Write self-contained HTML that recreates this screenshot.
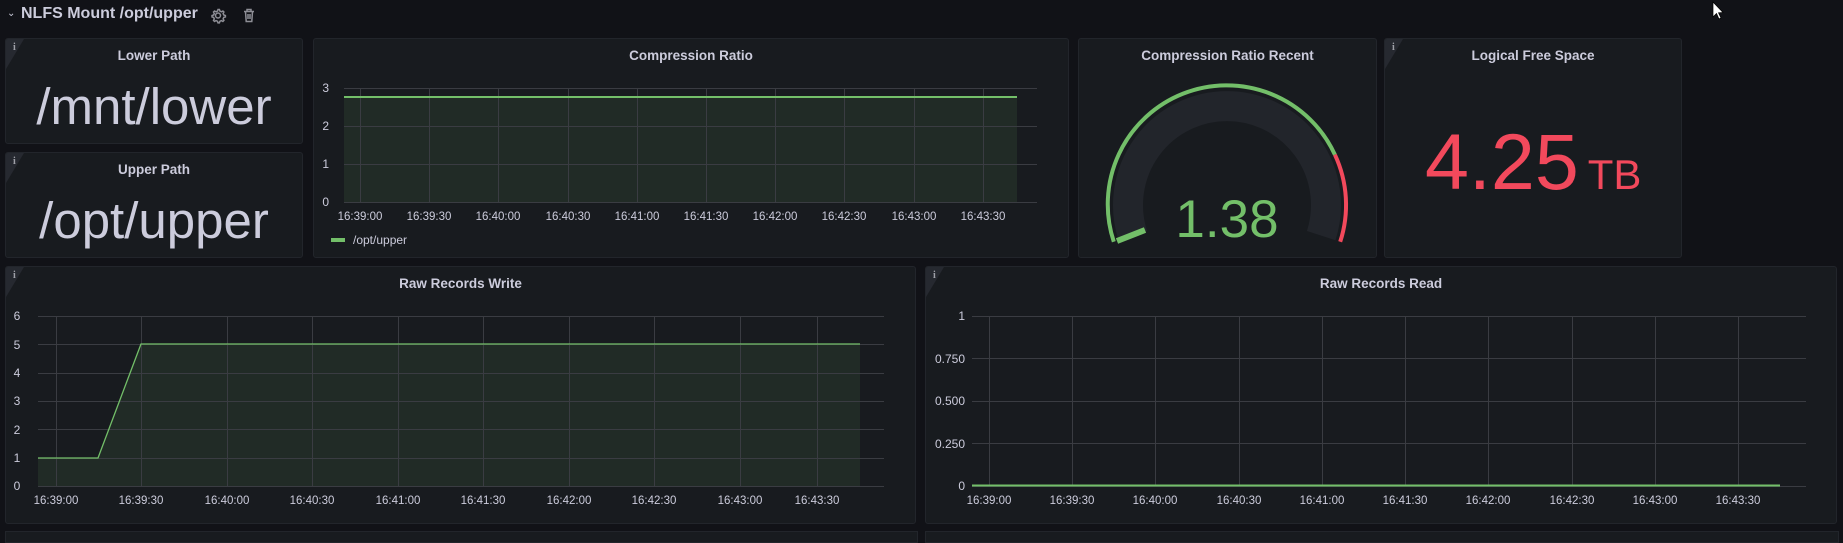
<!DOCTYPE html>
<html><head><meta charset="utf-8">
<style>
html,body{margin:0;padding:0;width:1843px;height:534px;overflow:hidden;background:#111217;font-family:"Liberation Sans",sans-serif;color:#ccccdc}
.p{position:absolute;background:#181b1f;border:1px solid #22252b;border-radius:3px;box-sizing:border-box;overflow:hidden}
.t{position:absolute;left:0;right:0;top:9px;text-align:center;font-size:13.5px;font-weight:bold;color:#ccccdc}
.i{position:absolute;left:0;top:0;width:0;height:0;border-top:30px solid #262930;border-right:18px solid transparent}
.ii{position:absolute;left:7px;top:3px;font-size:10px;font-weight:bold;color:#9fa1a8;font-family:"Liberation Serif",serif}
.big{position:absolute;left:0;right:0;text-align:center;color:#ccccdc}
svg text{font-family:"Liberation Sans",sans-serif}
</style></head><body>
<div style="position:absolute;left:7px;top:8px;font-size:10px;color:#ccccdc">&#8964;</div>
<div style="position:absolute;left:21px;top:5px;font-size:16px;font-weight:bold;color:#ccccdc">NLFS Mount /opt/upper</div>
<svg style="position:absolute;left:0;top:0" width="1843" height="36">
<g fill="none" stroke="#8e8e96" stroke-width="1.5">
<circle cx="218" cy="15.5" r="2.5"/>
<path d="M218 9.5 l1.4 0 .5 1.6 1.5 .7 1.5-.8 1 1 -.8 1.5 .7 1.5 1.6 .5 0 1.4 -1.6 .5 -.7 1.5 .8 1.5 -1 1 -1.5-.8 -1.5 .7 -.5 1.6 -1.4 0 -.5-1.6 -1.5-.7 -1.5 .8 -1-1 .8-1.5 -.7-1.5 -1.6-.5 0-1.4 1.6-.5 .7-1.5 -.8-1.5 1-1 1.5 .8 1.5-.7z"/>
<path d="M244 11.5h10M247 11.5v-2h4v2M245.5 11.5l.7 10h5.6l.7-10M248 14v5M250 14v5"/>
</g>
<path d="M1713 2 L1713 17 L1716.5 13.5 L1719 19 L1721 18 L1718.5 12.8 L1723 12.5 Z" fill="#fff" stroke="#000" stroke-width="0.7"/>
</svg>

<div class="p" style="left:5px;top:38px;width:298px;height:106px"><div class="i"></div><div class="ii">i</div><div class="t">Lower Path</div><div class="big" style="top:38px;font-size:51px;line-height:60px">/mnt/lower</div></div>
<div class="p" style="left:5px;top:152px;width:298px;height:106px"><div class="i"></div><div class="ii">i</div><div class="t">Upper Path</div><div class="big" style="top:38px;font-size:51px;line-height:60px">/opt/upper</div></div>

<div class="p" style="left:313px;top:38px;width:756px;height:220px"><div class="t">Compression Ratio</div></div>
<div class="p" style="left:1078px;top:38px;width:299px;height:220px"><div class="t">Compression Ratio Recent</div></div>
<div class="p" style="left:1384px;top:38px;width:298px;height:220px"><div class="i"></div><div class="ii">i</div><div class="t">Logical Free Space</div>
<div style="position:absolute;left:40px;top:75px;font-size:79px;color:#f2495c;white-space:nowrap;line-height:96px">4.25<span style="font-size:42px;margin-left:9px">TB</span></div></div>

<div class="p" style="left:5px;top:266px;width:911px;height:258px"><div class="i"></div><div class="ii">i</div><div class="t">Raw Records Write</div></div>
<div class="p" style="left:925px;top:266px;width:912px;height:258px"><div class="i"></div><div class="ii">i</div><div class="t">Raw Records Read</div></div>
<div style="position:absolute;left:5px;top:531px;width:911px;height:10px;background:#181b1f;border:1px solid #22252b"></div>
<div style="position:absolute;left:925px;top:531px;width:912px;height:10px;background:#181b1f;border:1px solid #22252b"></div>

<svg style="position:absolute;left:0;top:0" width="1843" height="534">
<!-- Compression ratio -->
<rect x="344" y="97" width="673" height="105" fill="rgba(115,191,105,0.1)"/>
<g stroke="#3a3c42" stroke-width="1">
<path d="M344 88.5H1037M344 126.5H1037M344 164.5H1037M344 202.5H1037"/>
<path d="M360.5 88V202M429.5 88V202M498.5 88V202M568.5 88V202M637.5 88V202M706.5 88V202M775.5 88V202M844.5 88V202M914.5 88V202M983.5 88V202"/>
</g>
<path d="M344 97H1017" stroke="#73bf69" stroke-width="2"/>
<g font-size="12" fill="#ccccdc" text-anchor="end"><text x="329" y="92">3</text><text x="329" y="130">2</text><text x="329" y="168">1</text><text x="329" y="206">0</text></g>
<g font-size="11.5" fill="#ccccdc" text-anchor="middle">
<text x="360" y="220">16:39:00</text><text x="429" y="220">16:39:30</text><text x="498" y="220">16:40:00</text><text x="568" y="220">16:40:30</text><text x="637" y="220">16:41:00</text><text x="706" y="220">16:41:30</text><text x="775" y="220">16:42:00</text><text x="844" y="220">16:42:30</text><text x="914" y="220">16:43:00</text><text x="983" y="220">16:43:30</text></g>
<rect x="331" y="238" width="14" height="4" fill="#73bf69"/>
<text x="353" y="244" font-size="12" fill="#ccccdc">/opt/upper</text>

<!-- Gauge -->
<path d="M1132.8 235.6 A99 99 0 1 1 1321.2 235.6" fill="none" stroke="#22252b" stroke-width="30"/>
<path d="M1113.8 241.8 A119 119 0 0 1 1334.9 154.7" fill="none" stroke="#73bf69" stroke-width="4"/>
<path d="M1334.9 154.7 A119 119 0 0 1 1340.2 241.8" fill="none" stroke="#f2495c" stroke-width="4"/>
<path d="M1117 241 L1145 230" stroke="#73bf69" stroke-width="6"/>
<text x="1227" y="237" font-size="53" fill="#73bf69" text-anchor="middle">1.38</text>

<!-- Write -->
<path d="M38 486 V458 H98 L141 344 H860 V486 Z" fill="rgba(115,191,105,0.1)"/>
<g stroke="#3a3c42" stroke-width="1">
<path d="M38 316.5H884M38 344.5H884M38 373.5H884M38 401.5H884M38 429.5H884M38 458.5H884M38 486.5H884"/>
<path d="M56.5 316V486M141.5 316V486M227.5 316V486M312.5 316V486M398.5 316V486M483.5 316V486M569.5 316V486M654.5 316V486M740.5 316V486M817.5 316V486"/>
</g>
<path d="M38 458 H98 L141 344 H860" fill="none" stroke="#73bf69" stroke-width="1.3"/>
<g font-size="12" fill="#ccccdc" text-anchor="middle"><text x="17" y="320">6</text><text x="17" y="349">5</text><text x="17" y="377">4</text><text x="17" y="405">3</text><text x="17" y="434">2</text><text x="17" y="462">1</text><text x="17" y="490">0</text></g>
<g font-size="11.5" fill="#ccccdc" text-anchor="middle">
<text x="56" y="504">16:39:00</text><text x="141" y="504">16:39:30</text><text x="227" y="504">16:40:00</text><text x="312" y="504">16:40:30</text><text x="398" y="504">16:41:00</text><text x="483" y="504">16:41:30</text><text x="569" y="504">16:42:00</text><text x="654" y="504">16:42:30</text><text x="740" y="504">16:43:00</text><text x="817" y="504">16:43:30</text></g>

<!-- Read -->
<g stroke="#3a3c42" stroke-width="1">
<path d="M972 316.5H1806M972 358.5H1806M972 401.5H1806M972 443.5H1806M972 486.5H1806"/>
<path d="M989.5 316V486M1072.5 316V486M1155.5 316V486M1239.5 316V486M1322.5 316V486M1405.5 316V486M1488.5 316V486M1572.5 316V486M1655.5 316V486M1738.5 316V486"/>
</g>
<path d="M972 485.5H1780" stroke="#73bf69" stroke-width="2"/>
<g font-size="12" fill="#ccccdc" text-anchor="end"><text x="965" y="320">1</text><text x="965" y="363">0.750</text><text x="965" y="405">0.500</text><text x="965" y="448">0.250</text><text x="965" y="490">0</text></g>
<g font-size="11.5" fill="#ccccdc" text-anchor="middle">
<text x="989" y="504">16:39:00</text><text x="1072" y="504">16:39:30</text><text x="1155" y="504">16:40:00</text><text x="1239" y="504">16:40:30</text><text x="1322" y="504">16:41:00</text><text x="1405" y="504">16:41:30</text><text x="1488" y="504">16:42:00</text><text x="1572" y="504">16:42:30</text><text x="1655" y="504">16:43:00</text><text x="1738" y="504">16:43:30</text></g>
</svg>
</body></html>
